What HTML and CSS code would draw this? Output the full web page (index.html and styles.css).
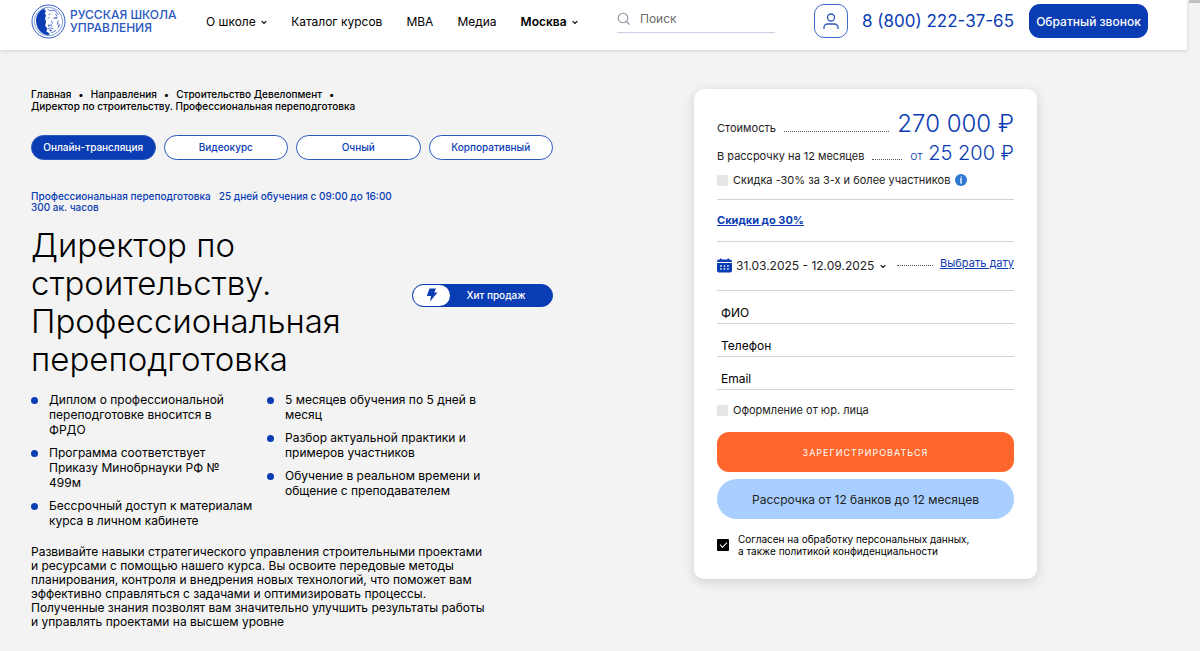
FILE: index.html
```html
<!DOCTYPE html>
<html lang="ru">
<head>
<meta charset="utf-8">
<meta name="viewport" content="width=device-width, initial-scale=1">
<title>Директор по строительству</title>
<link rel="stylesheet" href="styles.css">
</head>
<body>
<header class="header">
  <a class="logo" href="#">
    <svg class="logo-mark" viewBox="0 0 36 36" aria-hidden="true">
      <circle cx="18" cy="18" r="17" fill="#fff" stroke="#2a57c0" stroke-width="1"/>
      <circle cx="18" cy="18" r="14.6" fill="#fff" stroke="#2a57c0" stroke-width=".6"/>
      <path fill="#0a3cb4" d="M13 4.800C8 7 5 12 5.200 18c.4 5 2.300 9 5.800 11.500 2.500 1.600 5 2.500 7.500 2.500l.5-2-3-1.500.5-3.500-2-3 1-3.500-1-3.500 1-3.500-1.500-2 1.500-2-2-2 1-2z"/>
      <path fill="none" stroke="#2a57c0" stroke-width=".8" d="M17 5.500l3 1.500 4-.5M18 11l2-1M25 10l2 3M17 15l2-1M23 15l4-1M21 17l1 3-2 2 2 1M17 25.500l3-1 3 1M28 17l-1 4 1-1M20 29l3 0 3-2M24 6l4 5"/>
      <path fill="#0a3cb4" d="M17.500 21l2.500 1-2 1.500zM24 14l3 0-1 1.200zM18 26.500l4 0-2 1.500zM29 20l.5 2-2.500 4z"/>
    </svg>
    <span class="logo-text"><span>РУССКАЯ ШКОЛА</span><span>УПРАВЛЕНИЯ</span></span>
  </a>
  <nav class="nav">
    <a href="#">О школе <svg class="chev" viewBox="0 0 6 5"><path d="M.7 1.200L3 3.500l2.300-2.300"/></svg></a>
    <a href="#">Каталог курсов</a>
    <a href="#">MBA</a>
    <a href="#">Медиа</a>
    <a class="city" href="#">Москва <svg class="chev" viewBox="0 0 6 5"><path d="M.7 1.200L3 3.500l2.300-2.300"/></svg></a>
  </nav>
  <label class="search">
    <svg viewBox="0 0 14 14" aria-hidden="true"><circle cx="6" cy="6" r="4.800"/><path d="M9.500 9.500L12.500 12.500"/></svg>
    <input type="text" placeholder="Поиск" aria-label="Поиск">
  </label>
  <button class="user" type="button" aria-label="Личный кабинет">
    <svg viewBox="0 0 16 17"><circle cx="8" cy="4.500" r="3.500"/><path d="M1 16v-1.500a3.500 3.500 0 0 1 3.500-3.500h7a3.500 3.500 0 0 1 3.500 3.500V16"/></svg>
  </button>
  <a class="phone" href="tel:88002223765">8 (800) 222-37-65</a>
  <button class="callback" type="button">Обратный звонок</button>
</header>
<div class="scroll" aria-hidden="true"></div>

<main class="main">
  <section class="course">
    <nav class="crumbs">
      <a href="#">Главная</a><i>•</i><a href="#">Направления</a><i>•</i><a href="#">Строительство Девелопмент</a><i>•</i>
      <span>Директор по строительству. Профессиональная переподготовка</span>
    </nav>
    <div class="tabs">
      <button class="tab active" type="button">Онлайн-трансляция</button>
      <button class="tab" type="button">Видеокурс</button>
      <button class="tab" type="button">Очный</button>
      <button class="tab" type="button">Корпоративный</button>
    </div>
    <div class="meta">
      <span>Профессиональная переподготовка</span>
      <span>25 дней обучения с 09:00 до 16:00</span>
      <span>300 ак. часов</span>
    </div>
    <div class="title-row">
      <h1>Директор по строительству. Профессиональная переподготовка</h1>
      <div class="hit">
        <span class="hit-icon"><svg viewBox="0 0 12 14"><path d="M3.500.5h6.500L8.200 4.500h3.300L4 13.500l1-5.500H.8z"/></svg></span>
        <span class="hit-text">Хит продаж</span>
      </div>
    </div>
    <div class="lists">
      <ul>
        <li>Диплом о профессиональной переподготовке вносится в<br>ФРДО</li>
        <li>Программа соответствует Приказу Минобрнауки РФ №<br>499м</li>
        <li>Бессрочный доступ к материалам курса в личном кабинете</li>
      </ul>
      <ul>
        <li>5 месяцев обучения по 5 дней в месяц</li>
        <li>Разбор актуальной практики и примеров участников</li>
        <li>Обучение в реальном времени и общение с преподавателем</li>
      </ul>
    </div>
    <p class="about">Развивайте навыки стратегического управления строительными проектами<br>и ресурсами с помощью нашего курса. Вы освоите передовые методы<br>планирования, контроля и внедрения новых технологий, что поможет вам<br>эффективно справляться с задачами и оптимизировать процессы.<br>Полученные знания позволят вам значительно улучшить результаты работы<br>и управлять проектами на высшем уровне</p>
  </section>

  <form class="card">
    <div class="price-row total"><span>Стоимость</span><i class="dots"></i><b>270 000 ₽</b></div>
    <div class="price-row part"><span>В рассрочку на 12 месяцев</span><i class="dots"></i><b><small>от</small> 25 200 ₽</b></div>
    <label class="check discount"><input type="checkbox"><span>Скидка -30% за 3-х и более участников</span>
      <svg class="info" viewBox="0 0 12 12" aria-hidden="true"><circle cx="6" cy="6" r="6" fill="#2f78d0"/><path d="M6.300 2.500v1.200M5 5.200h1.200L5.800 9h1.200" fill="none" stroke="#fff" stroke-width="1.200"/></svg>
    </label>
    <div class="sale"><a href="#">Скидки до 30%</a></div>
    <div class="dates">
      <svg class="cal" viewBox="0 0 15 15" aria-hidden="true"><path fill="#0a3cb4" d="M2 1.500h1V.5h1.500v1h6v-1H12v1h1a2 2 0 0 1 2 2V4H0v-.5a2 2 0 0 1 2-2zM0 5h15v7.500a2 2 0 0 1-2 2H2a2 2 0 0 1-2-2z"/><path stroke="#fff" stroke-width="1.300" stroke-dasharray="1.500 2" d="M3.200 8h9M3.200 11h9"/></svg>
      <button class="period" type="button">31.03.2025 - 12.09.2025 <svg class="chev" viewBox="0 0 6 5"><path d="M.7 1.200L3 3.500l2.300-2.300"/></svg></button>
      <i class="dots"></i>
      <a href="#">Выбрать дату</a>
    </div>
    <div class="fields">
      <input type="text" placeholder="ФИО" aria-label="ФИО">
      <input type="tel" placeholder="Телефон" aria-label="Телефон">
      <input type="email" placeholder="Email" aria-label="Email">
    </div>
    <label class="check company"><input type="checkbox"><span>Оформление от юр. лица</span></label>
    <button class="submit" type="button">ЗАРЕГИСТРИРОВАТЬСЯ</button>
    <button class="installment" type="button">Рассрочка от 12 банков до 12 месяцев</button>
    <label class="check agree"><input type="checkbox" checked><span>Согласен на обработку персональных данных,<br>а также политикой конфиденциальности</span></label>
  </form>
</main>
</body>
</html>
```
FILE: styles.css
```css
* { box-sizing: border-box; }
body {
  margin: 0;
  padding-right: 13px;
  background: #f3f3f3;
  color: #000;
  font: 12px/15px Inter, "Liberation Sans", sans-serif;
}
a { color: inherit; text-decoration: none; }
i { font-style: normal; }
button, input { font: inherit; color: inherit; }
button { cursor: pointer; padding: 0; }
.scroll { position: fixed; top: 0; right: 0; width: 11px; height: 3px; background: #c1c1c1; }

.header {
  display: flex;
  align-items: center;
  height: 50px;
  padding: 0 39px 8px 31px;
  background: #fff;
  box-shadow: 0 1px 4px rgba(0, 0, 0, .15);
}
.logo { display: flex; align-items: center; gap: 4px; width: 175px; color: #2a57c0; }
.logo-mark { width: 35px; height: 35px; flex: none; }
.logo-text { display: flex; flex-direction: column; font-size: 12px; font-weight: 500; line-height: 13px; white-space: nowrap; }
.nav { display: flex; gap: 24px; font-size: 12px; white-space: nowrap; }
.city { font-weight: 600; }
.chev { width: 6px; height: 5px; margin-left: 2px; vertical-align: 1px; fill: none; stroke: #000; stroke-width: 1.2; }
.search {
  display: flex;
  align-items: center;
  gap: 9px;
  width: 158px;
  height: 28px;
  margin: 0 39px 4px auto;
  border-bottom: 1px solid #c9d0e2;
}
.search svg { width: 14px; height: 14px; flex: none; fill: none; stroke: #8d949e; stroke-width: 1.1; }
.search input { width: 100%; min-width: 0; padding: 0; border: 0; outline: 0; background: none; }
.search input::placeholder { color: #6b6b6b; opacity: 1; }
.user {
  display: flex;
  align-items: center;
  justify-content: center;
  width: 34px;
  height: 34px;
  border: 1px solid #3f6ac8;
  border-radius: 10px;
  background: #fff;
}
.user svg { width: 16px; height: 17px; fill: none; stroke: #2a57c0; stroke-width: 1.3; }
.phone { margin: 0 15px 0 14px; color: #0a3cb4; font-size: 17px; white-space: nowrap; }
.callback {
  width: 119px;
  height: 34px;
  border: 0;
  border-radius: 11px;
  background: #0a3cb4;
  color: #fff;
  font-weight: 500;
  white-space: nowrap;
}

.main {
  display: flex;
  justify-content: space-between;
  align-items: flex-start;
  padding: 38px 150px 20px 31px;
}
.course { width: 522px; }
.crumbs { font-size: 10px; font-weight: 500; line-height: 12px; }
.crumbs i { margin: 0 7px; }
.crumbs span { display: block; }
.tabs { display: grid; grid-template-columns: repeat(4, 1fr); gap: 8px; margin-top: 23px; }
.tab {
  height: 25px;
  border: 1px solid #2a57c0;
  border-radius: 13px;
  background: #fff;
  color: #0a3cb4;
  font-size: 10px;
  font-weight: 500;
}
.tab.active { background: #0a3cb4; color: #fff; }
.meta {
  display: flex;
  flex-wrap: wrap;
  column-gap: 8px;
  width: 400px;
  margin-top: 31px;
  color: #0a3cb4;
  font-size: 10px;
  font-weight: 500;
  line-height: 11px;
}
.title-row { display: flex; align-items: center; justify-content: space-between; margin-top: 13px; }
h1 { width: 330px; margin: 0; font-size: 33px; font-weight: 300; line-height: 38px; }
.hit {
  display: flex;
  width: 141px;
  height: 23px;
  margin-top: -14px;
  border: 1px solid #0a3cb4;
  border-radius: 12px;
  background: #0a3cb4;
  color: #fff;
  font-size: 10px;
  font-weight: 500;
  line-height: 21px;
}
.hit-icon { display: flex; align-items: center; justify-content: center; width: 37px; border-radius: 11px; background: #fff; }
.hit-icon svg { width: 12px; height: 14px; fill: #0a3cb4; }
.hit-text { flex: 1; padding-right: 10px; text-align: center; }
.lists { display: grid; grid-template-columns: 224px 224px; gap: 12px; margin-top: 14px; }
ul { display: flex; flex-direction: column; gap: 8px; margin: 0; padding: 0; list-style: none; }
li { position: relative; padding-left: 18px; }
li::before {
  content: "";
  position: absolute;
  left: 0;
  top: 5px;
  width: 7px;
  height: 7px;
  border-radius: 50%;
  background: #0a3cb4;
}
.about { margin: 17px 0 0; line-height: 14px; white-space: nowrap; }

.card {
  width: 343px;
  margin-top: 1px;
  padding: 20px 23px 22px;
  border-radius: 10px;
  background: #fff;
  box-shadow: 0 3px 12px rgba(0, 0, 0, .15);
  color: #222;
  font-size: 11px;
}
.dots { flex: 1; border-bottom: 1px dotted #555; }
.price-row { display: flex; align-items: baseline; gap: 8px; white-space: nowrap; }
.price-row b { color: #0a3cb4; font-weight: 300; }
.total b { font-size: 24px; line-height: 30px; }
.part b { font-size: 20px; line-height: 29px; }
.part small { font-size: 12px; }
.check { display: flex; align-items: center; gap: 5px; white-space: nowrap; }
.check input { appearance: none; width: 11px; height: 11px; margin: 0; flex: none; background: #e5e5e5; border-radius: 1px; }
.discount { height: 20px; margin-bottom: 9px; }
.info { width: 12px; height: 12px; }
.sale { border: solid #d2d2d2; border-width: 1px 0; padding: 13px 0 13px; color: #0a3cb4; font-size: 11px; font-weight: 700; }
.sale a, .dates a { text-decoration: underline; }
.dates { display: flex; align-items: center; height: 49px; padding-bottom: 1px; border-bottom: 1px solid #d2d2d2; font-size: 12px; white-space: nowrap; }
.cal { width: 15px; height: 15px; }
.period { margin: 0 11px 0 4px; border: 0; background: none; }
.dates .dots { margin-right: 7px; }
.dates a { padding-bottom: 4px; color: #0a3cb4; font-size: 11px; }
.fields { display: flex; flex-direction: column; }
.fields input { height: 33px; padding: 10px 4px 0; border: 0; border-bottom: 1px solid #d2d2d2; background: none; font-size: 12px; outline: 0; }
.fields input::placeholder { color: #000; opacity: 1; }
.company { margin: 13px 0 14px; }
.submit, .installment { display: block; width: 100%; height: 40px; border: 0; }
.submit { border-radius: 12px; background: #ff662c; color: #fff; font-size: 9px; letter-spacing: 1px; }
.installment { margin: 7px 0 14px; border-radius: 20px; background: #a8cfff; font-size: 12px; }
.agree { gap: 9px; color: #000; font-size: 10px; line-height: 12px; }
.agree input { width: 12px; height: 12px; background: #000; display: grid; place-items: center; }
.agree input::before { content: ""; width: 6px; height: 3px; margin-top: -2px; border: solid #fff; border-width: 0 0 1px 1px; transform: rotate(-45deg); }
```
